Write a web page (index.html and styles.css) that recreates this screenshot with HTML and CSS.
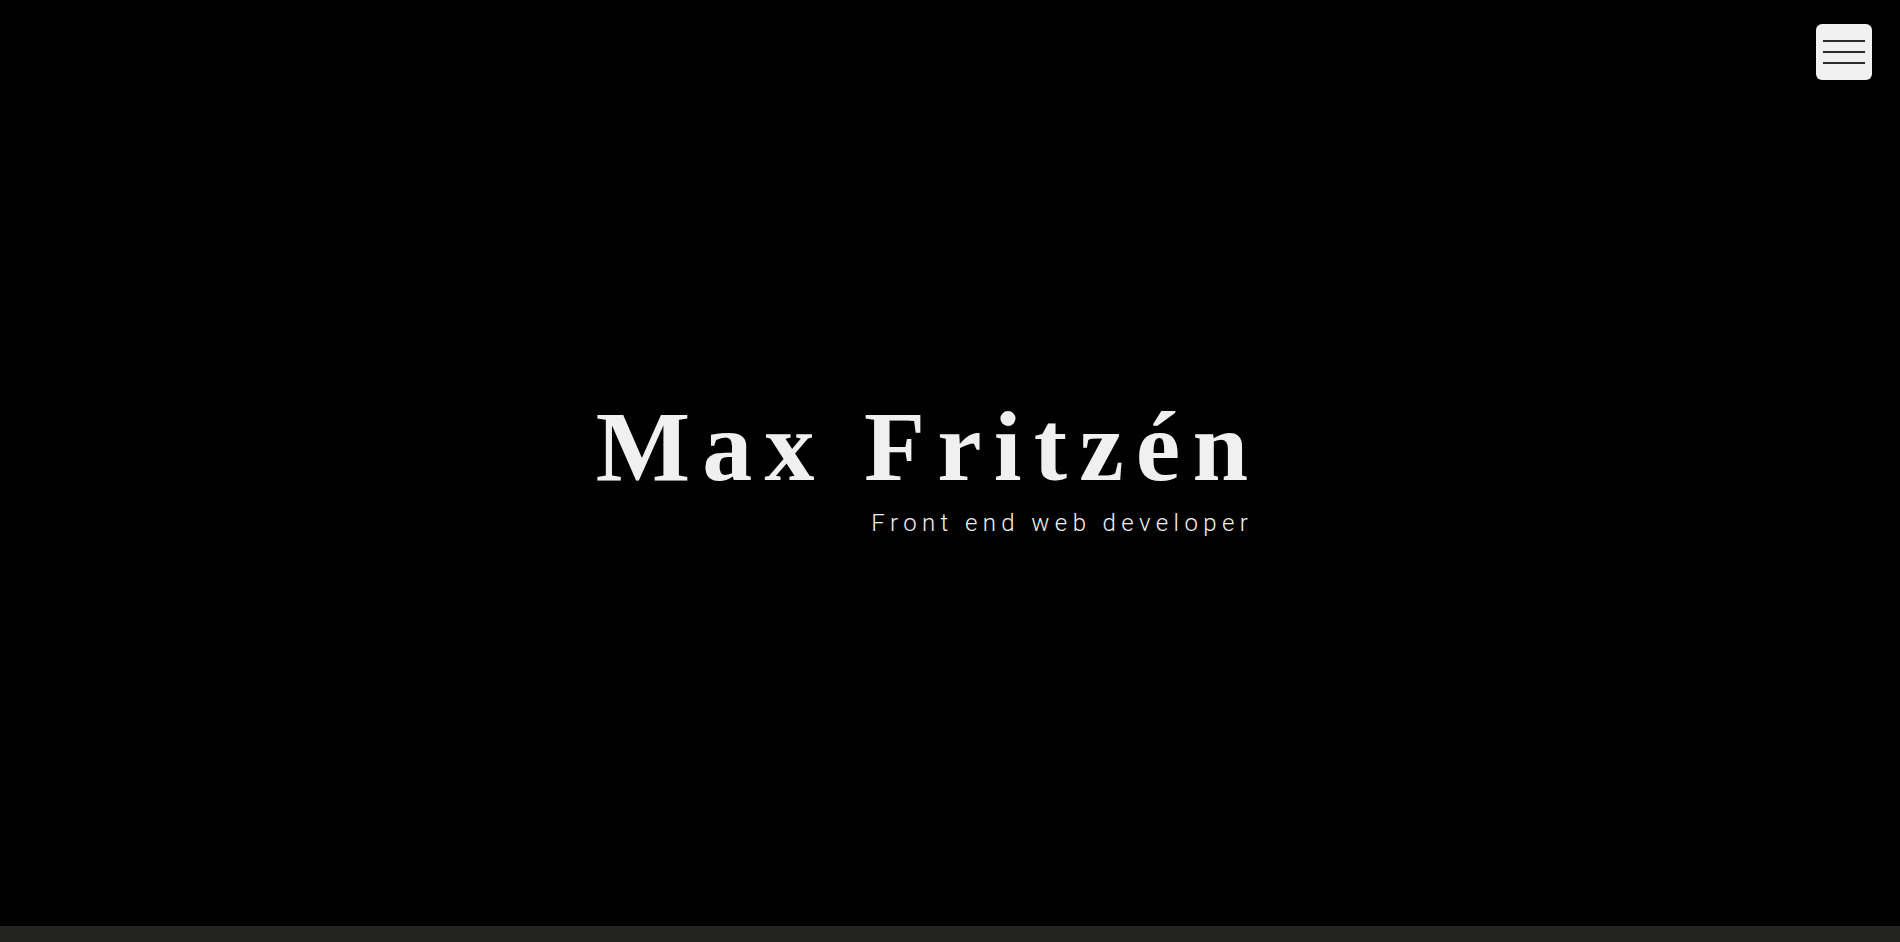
FILE: index.html
```html
<!DOCTYPE html>
<html lang="en">
<head>
<meta charset="utf-8">
<title>Max Fritzén</title>
<link rel="stylesheet" href="styles.css">
</head>
<body>
<main class="hero">
  <div class="intro">
    <h1 class="name">Max Fritzén</h1>
    <p class="role">Front end web developer</p>
  </div>
</main>
<button class="menu-btn" aria-label="Menu">
  <span class="menu-line"></span>
  <span class="menu-line"></span>
  <span class="menu-line"></span>
</button>
<footer class="bottom-bar"></footer>
</body>
</html>
```

FILE: styles.css
```css
html, body {
  margin: 0;
  padding: 0;
  background: #000;
}

body {
  font-family: "Roboto", "Liberation Sans", sans-serif;
  overflow: hidden;
}

.hero {
  height: 926px;
  box-sizing: border-box;
  padding-top: 9px;
  padding-right: 44px;
  display: flex;
  align-items: center;
  justify-content: center;
  background: #010101;
}

.intro {
  display: flex;
  flex-direction: column;
  align-items: flex-end;
}

.name {
  margin: 0;
  font-family: "Liberation Serif", "Times New Roman", serif;
  font-weight: 700;
  font-size: 100px;
  line-height: 1;
  letter-spacing: 12.2px;
  color: #f0f0f0;
}

.role {
  margin: 12px 7px 0 0;
  font-family: "Roboto", "Liberation Sans", sans-serif;
  font-weight: 300;
  font-size: 24px;
  line-height: 1.2;
  letter-spacing: 5.4px;
  color: #f0f0f0;
}

.menu-btn {
  position: fixed;
  top: 24px;
  right: 28px;
  width: 56px;
  height: 56px;
  padding: 0;
  border: none;
  border-radius: 6px;
  background: #f0f0f0;
  display: flex;
  flex-direction: column;
  align-items: center;
  justify-content: center;
  gap: 9px;
  cursor: pointer;
}

.menu-line {
  display: block;
  width: 42px;
  height: 2px;
  background: #2b2b2b;
}

.bottom-bar {
  height: 16px;
  background: #232321;
}
```
